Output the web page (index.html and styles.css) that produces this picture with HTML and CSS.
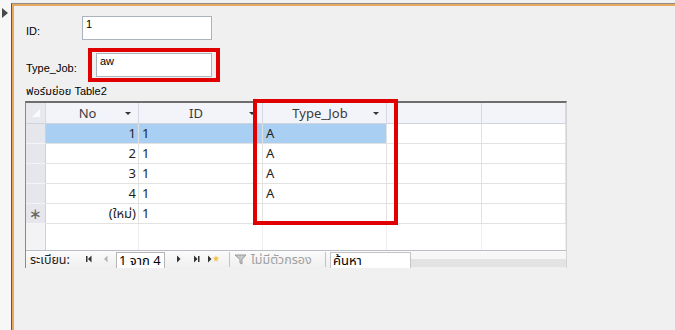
FILE: index.html
```html
<!DOCTYPE html>
<html lang="th">
<head>
    <meta charset="UTF-8">
    <title>Table2 form</title>
    <link rel="stylesheet" href="styles.css">
</head>
<body>
    <div class="page">
        <div class="strip"><span class="current-mark"></span></div>
        <div class="main">
            <div class="frame">
                <div class="field-row">
                    <label class="field-label">ID:</label>
                    <div class="textbox id-box">1</div>
                </div>
                <div class="field-row type-row">
                    <label class="field-label type-label">Type_Job:</label>
                    <div class="highlight">
                        <div class="textbox type-box">aw</div>
                    </div>
                </div>
                <div class="subform-caption">ฟอร์มย่อย Table2</div>

                <div class="subform-wrap">
                    <div class="subform">
                        <div class="sheet">
                            <!-- header -->
                            <div class="hcell corner">
                                <svg width="10" height="10" viewBox="0 0 10 10"><path d="M9 1 L9 9 L1 9 Z" fill="#fbfbfd"/></svg>
                            </div>
                            <div class="hcell"><span class="htext">No</span><span class="drop"></span></div>
                            <div class="hcell"><span class="htext">ID</span><span class="drop"></span></div>
                            <div class="hcell"><span class="htext">Type_Job</span><span class="drop"></span></div>
                            <div class="hcell"></div>
                            <div class="hcell"></div>

                            <!-- rows -->
                            <div class="sel"></div>
                            <div class="cell num active">1</div>
                            <div class="cell active">1</div>
                            <div class="cell active">A</div>
                            <div class="cell"></div>
                            <div class="cell"></div>

                            <div class="sel"></div>
                            <div class="cell num">2</div>
                            <div class="cell">1</div>
                            <div class="cell">A</div>
                            <div class="cell"></div>
                            <div class="cell"></div>

                            <div class="sel"></div>
                            <div class="cell num">3</div>
                            <div class="cell">1</div>
                            <div class="cell">A</div>
                            <div class="cell"></div>
                            <div class="cell"></div>

                            <div class="sel"></div>
                            <div class="cell num">4</div>
                            <div class="cell">1</div>
                            <div class="cell">A</div>
                            <div class="cell"></div>
                            <div class="cell"></div>

                            <div class="sel new-mark">&#x2217;</div>
                            <div class="cell num">(ใหม่)</div>
                            <div class="cell">1</div>
                            <div class="cell"></div>
                            <div class="cell"></div>
                            <div class="cell"></div>
                        </div>

                        <div class="sheet filler">
                            <div class="sel"></div>
                            <div class="cell"></div>
                            <div class="cell"></div>
                            <div class="cell"></div>
                            <div class="cell"></div>
                            <div class="cell"></div>
                        </div>

                        <div class="navbar">
                            <span class="nav-label">ระเบียน:</span>
                            <span class="nav-btn">
                                <svg width="16" height="14" viewBox="0 0 16 14"><rect x="2" y="4" width="1.5" height="6" fill="#333"/><path d="M7.5 3.5 L4 7 L7.5 10.5 Z" fill="#333"/></svg>
                            </span>
                            <span class="nav-btn">
                                <svg width="16" height="14" viewBox="0 0 16 14"><path d="M7.5 3.5 L4 7 L7.5 10.5 Z" fill="#b5b5b5"/></svg>
                            </span>
                            <span class="nav-pos">1 จาก 4</span>
                            <span class="nav-btn next">
                                <svg width="16" height="14" viewBox="0 0 16 14"><path d="M6 3.5 L9.5 7 L6 10.5 Z" fill="#333"/></svg>
                            </span>
                            <span class="nav-btn">
                                <svg width="16" height="14" viewBox="0 0 16 14"><path d="M7 3.5 L10.5 7 L7 10.5 Z" fill="#333"/><rect x="11" y="4" width="1.5" height="6" fill="#333"/></svg>
                            </span>
                            <span class="nav-btn wide">
                                <svg width="22" height="14" viewBox="0 0 22 14"><path d="M5 3.5 L8.5 7 L5 10.5 Z" fill="#333"/><path d="M13 3 L13.8 5.6 L16.5 5.6 L14.3 7.2 L15.1 9.8 L13 8.2 L10.9 9.8 L11.7 7.2 L9.5 5.6 L12.2 5.6 Z" fill="#f0c040"/></svg>
                            </span>
                            <span class="nav-sep"></span>
                            <span class="nav-filter-icon">
                                <svg width="14" height="14" viewBox="0 0 14 14"><path d="M1 3 L12 3 L8 7.5 L8 12 L6 11 L6 7.5 Z" fill="#c9c9c9" stroke="#9b9b9b" stroke-width="1"/></svg>
                            </span>
                            <span class="nav-filter">ไม่มีตัวกรอง</span>
                            <span class="nav-sep"></span>
                            <span class="nav-search">ค้นหา</span>
                            <span class="nav-rest"></span>
                        </div>
                    </div>
                    <div class="col-highlight"></div>
                </div>
            </div>
        </div>
    </div>
</body>
</html>
```

FILE: styles.css
```css
body {
    margin: 0;
    background-color: #f0f0f0;
    font-family: "Liberation Sans", "Noto Sans Thai", Tahoma, sans-serif;
    color: #000;
    width: 675px;
    height: 330px;
    overflow: hidden;
}

.page {
    display: flex;
    height: 330px;
}

/* record selector strip of the main form */
.strip {
    width: 11px;
    flex: none;
    background-color: #f7f7f7;
    padding-top: 8px;
    box-sizing: border-box;
}

.current-mark {
    display: block;
    margin-left: 2px;
    width: 0;
    height: 0;
    border-left: 6px solid #4a4a4a;
    border-top: 5px solid transparent;
    border-bottom: 5px solid transparent;
}

.main {
    flex: 1;
    margin-top: 3px;
    border-top: 1px solid #8e8e8e;
    border-left: 1px solid #6a5535;
}

.frame {
    height: 100%;
    box-sizing: border-box;
    border-top: 2px solid #eaa85e;
    border-left: 2px solid #eaa85e;
    padding: 10px 0 0 12px;
}

.field-row {
    display: flex;
    align-items: center;
}

.field-label {
    font-size: 11px;
    width: 56px;
    padding-top: 6px;
}

.type-label {
    width: 62px;
}

.type-row {
    margin-top: 8px;
}

.textbox {
    background-color: #fff;
    border: 1px solid #abb3bd;
    height: 24px;
    box-sizing: border-box;
    font-size: 11px;
    line-height: 13px;
    padding: 1px 3px;
}

.id-box {
    width: 130px;
}

.type-box {
    width: 116px;
}

.highlight {
    border: 4px solid #e00000;
    padding: 1px 4px;
}

.subform-caption {
    font-size: 11px;
    line-height: 13px;
    height: 13px;
    margin: 3px 0 3px;
}

/* datasheet subform */
.subform-wrap {
    position: relative;
    width: 542px;
    margin-left: -1px;
}

.subform {
    height: 167px;
    box-sizing: border-box;
    border-top: 2px solid #6d6d6d;
    border-left: 1px solid #8a8a8a;
    border-right: 1px solid #d4d4d4;
    background-color: #fff;
    display: flex;
    flex-direction: column;
    overflow: hidden;
    font-family: "Noto Sans", "Noto Sans Thai", Tahoma, sans-serif;
}

.sheet {
    display: grid;
    grid-template-columns: 20px 93px 124px 124px 95px 1fr;
    grid-template-rows: 21px repeat(5, 20px);
}

.hcell {
    display: flex;
    align-items: center;
    background-color: #f3f4fa;
    border-right: 1px solid #d6d9e3;
    border-bottom: 1px solid #d0d3dd;
    box-sizing: border-box;
    font-size: 13px;
    color: #3a3a3a;
    padding-right: 7px;
}

.hcell.corner {
    background-color: #e8e9ef;
    padding: 0 0 0 5px;
}

.htext {
    flex: 1;
    text-align: center;
    padding-left: 4px;
}

.drop {
    width: 0;
    height: 0;
    border-top: 3px solid #333;
    border-left: 3px solid transparent;
    border-right: 3px solid transparent;
}

.sel {
    background-color: #e6e7ed;
    border-right: 1px solid #cdd0da;
    border-bottom: 1px solid #f4f4f7;
    box-sizing: border-box;
}

.new-mark {
    font-size: 15px;
    line-height: 19px;
    color: #666;
    text-align: center;
}

.cell {
    border-right: 1px solid #e2e2e2;
    border-bottom: 1px solid #e2e2e2;
    box-sizing: border-box;
    font-size: 13px;
    line-height: 19px;
    padding: 0 3px;
    color: #1e1e1e;
    white-space: nowrap;
}

.cell.num {
    text-align: right;
    padding-right: 2px;
}

.cell.active {
    background-color: #a9cff3;
}

.sheet.filler {
    flex: 1;
    grid-template-rows: 1fr;
}

.filler .cell {
    border-right-color: #efefef;
    border-bottom: none;
}

.filler .sel {
    background-color: #f3f3f6;
    border-bottom: none;
}

/* record navigation bar */
.navbar {
    height: 16px;
    flex: none;
    display: flex;
    align-items: flex-start;
    border-top: 1px solid #b9bdc5;
    background: linear-gradient(#fbfbfb, #efefef);
    padding: 1px 0 0 4px;
    font-size: 12.5px;
    white-space: nowrap;
}

.nav-label {
    width: 54px;
    color: #222;
    line-height: 15px;
}

.nav-btn {
    width: 16px;
    height: 14px;
    display: flex;
}

.nav-btn.next {
    margin-left: 6px;
}

.nav-btn.wide {
    width: 22px;
}

.nav-pos {
    width: 49px;
    height: 16px;
    box-sizing: border-box;
    border: 1px solid #b5b5b5;
    border-bottom: none;
    background-color: #fff;
    padding-left: 2px;
    font-size: 13px;
    line-height: 15px;
}

.nav-sep {
    width: 1px;
    height: 15px;
    margin: 0 4px;
    background-color: #c2c2c2;
}

.nav-filter-icon {
    width: 14px;
    height: 14px;
    display: flex;
}

.nav-filter {
    width: 70px;
    margin-left: 3px;
    color: #a0a0a0;
    line-height: 15px;
}

.nav-search {
    width: 81px;
    height: 16px;
    box-sizing: border-box;
    border: 1px solid #c4c4c4;
    border-bottom: none;
    background-color: #fff;
    padding-left: 2px;
    font-size: 13px;
    line-height: 15px;
}

.nav-rest {
    flex: 1;
    height: 15px;
    background: linear-gradient(#f7f7f7 50%, #e3e3e3 50%);
}

/* red marker drawn over the Type_Job column */
.col-highlight {
    position: absolute;
    left: 228px;
    top: -2px;
    width: 145px;
    height: 126px;
    box-sizing: border-box;
    border: 4px solid #e00000;
}
```
